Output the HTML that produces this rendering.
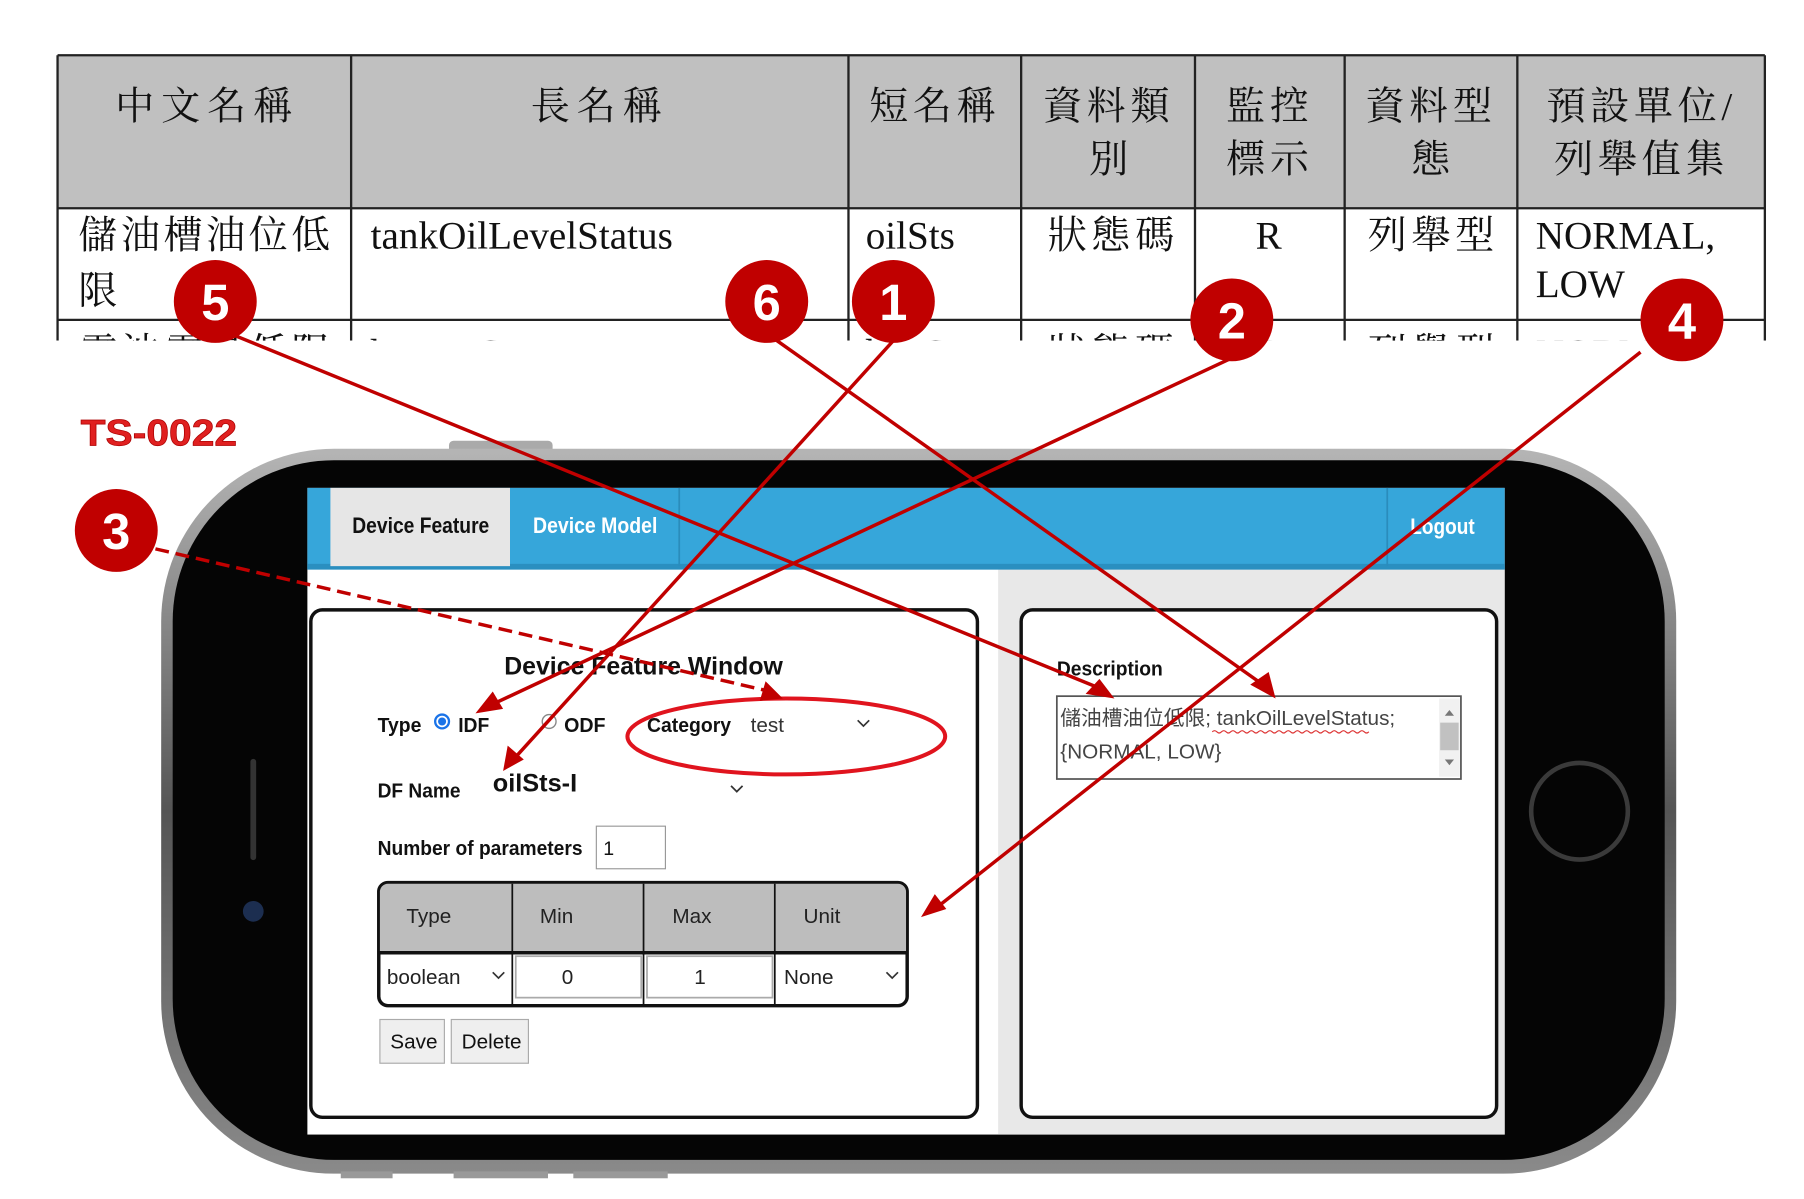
<!DOCTYPE html>
<html><head><meta charset="utf-8">
<style>
html,body{margin:0;padding:0;background:#fff;width:1804px;height:1199px;overflow:hidden}
svg{display:block}
.s{font-family:"Liberation Serif","Noto Serif CJK TC","Noto Serif CJK SC",serif;font-size:34px;fill:#111}
.u{font-family:"Liberation Sans","Noto Sans CJK TC",sans-serif;fill:#111}
.n{font-family:"Liberation Sans",sans-serif;font-weight:bold;fill:#fff;font-size:44px;text-anchor:middle}
</style></head><body>
<svg width="1804" height="1199" viewBox="0 0 1567 1042" preserveAspectRatio="none" xmlns="http://www.w3.org/2000/svg">
<defs>
<linearGradient id="edge" x1="0" y1="0" x2="0" y2="1">
<stop offset="0" stop-color="#b5b5b5"/><stop offset="0.5" stop-color="#555"/><stop offset="1" stop-color="#8a8a8a"/>
</linearGradient>
</defs>
<!-- table -->
<rect x="50" y="48" width="1483" height="133" fill="#c0c0c0"/>
<rect x="50" y="181" width="1483" height="120" fill="#fff"/>
<g stroke="#222" stroke-width="2" fill="none">
<line x1="50" y1="48" x2="1533" y2="48"/>
<line x1="50" y1="181" x2="1533" y2="181"/>
<line x1="50" y1="278" x2="1533" y2="278"/>
<line x1="50" y1="48" x2="50" y2="296"/>
<line x1="305" y1="48" x2="305" y2="296"/>
<line x1="737" y1="48" x2="737" y2="296"/>
<line x1="887" y1="48" x2="887" y2="296"/>
<line x1="1038" y1="48" x2="1038" y2="296"/>
<line x1="1168" y1="48" x2="1168" y2="296"/>
<line x1="1318" y1="48" x2="1318" y2="296"/>
<line x1="1533" y1="48" x2="1533" y2="296"/>
</g>
<g class="s" text-anchor="middle">
<text x="180" y="104" letter-spacing="6">中文名稱</text>
<text x="521" y="104" letter-spacing="6">長名稱</text>
<text x="812" y="104" letter-spacing="4">短名稱</text>
<text x="963" y="104" letter-spacing="4">資料類</text><text x="963" y="150">別</text>
<text x="1103" y="104" letter-spacing="4">監控</text><text x="1103" y="150" letter-spacing="4">標示</text>
<text x="1243" y="104" letter-spacing="4">資料型</text><text x="1243" y="150">態</text>
<text x="1426" y="104" letter-spacing="4">預設單位/</text><text x="1426" y="150" letter-spacing="4">列舉值集</text>
<text x="1102" y="216">R</text>
<text x="1102" y="318">R</text>
</g>
<g class="s">
<text x="68" y="216" letter-spacing="3">儲油槽油位低</text><text x="68" y="264">限</text>
<text x="322" y="216">tankOilLevelStatus</text>
<text x="752" y="216">oilSts</text>
<text x="910" y="216" letter-spacing="4">狀態碼</text>
<text x="1188" y="216" letter-spacing="4">列舉型</text>
<text x="1334" y="216">NORMAL,</text><text x="1334" y="258">LOW</text>
<text x="68" y="318" letter-spacing="3">電池電量低限</text>
<text x="322" y="318">batteryStatus</text>
<text x="752" y="318">battSts</text>
<text x="910" y="318" letter-spacing="4">狀態碼</text>
<text x="1188" y="318" letter-spacing="4">列舉型</text>
<text x="1334" y="318">NORMAL</text>
</g>
<rect x="0" y="296" width="1567" height="80" fill="#fff"/>

<text x="70" y="387" font-family="Liberation Sans,sans-serif" font-weight="bold" font-size="32" fill="#e02020" stroke="#a00" stroke-width="0.6" textLength="136" lengthAdjust="spacingAndGlyphs">TS-0022</text>

<!-- phone -->
<rect x="390" y="383" width="90" height="12" rx="4" fill="#aaa"/>
<rect x="140" y="390" width="1316" height="630" rx="150" fill="url(#edge)"/>
<rect x="150" y="400" width="1296" height="608" rx="140" fill="#050505"/>
<rect x="296" y="1018" width="45" height="6" fill="#999"/>
<rect x="394" y="1018" width="82" height="6" fill="#999"/>
<rect x="498" y="1018" width="82" height="6" fill="#999"/>
<line x1="220" y1="662" x2="220" y2="745" stroke="#333" stroke-width="5" stroke-linecap="round"/>
<circle cx="220" cy="792" r="9" fill="#1c2e50"/>
<circle cx="1372" cy="705" r="42" fill="none" stroke="#3a3a3a" stroke-width="4"/>

<!-- screen -->
<rect x="267" y="424" width="1040" height="562" fill="#fff"/>
<rect x="867" y="495" width="440" height="491" fill="#e8e8e8"/>
<rect x="267" y="424" width="1040" height="71" fill="#36a6da"/>
<rect x="267" y="490" width="1040" height="5" fill="#2a8fc0"/>
<rect x="287" y="424" width="156" height="68" fill="#e6e6e6"/>
<line x1="590" y1="424" x2="590" y2="492" stroke="#2a8cbc" stroke-width="1.5"/>
<line x1="1205" y1="424" x2="1205" y2="492" stroke="#2a8cbc" stroke-width="1.5"/>
<text class="u" x="306" y="463" font-size="19" font-weight="bold" textLength="119" lengthAdjust="spacingAndGlyphs">Device Feature</text>
<text class="u" x="463" y="463" font-size="19" font-weight="bold" style="fill:#fff" textLength="108" lengthAdjust="spacingAndGlyphs">Device Model</text>
<text class="u" x="1225" y="464" font-size="19" font-weight="bold" style="fill:#fff" textLength="56" lengthAdjust="spacingAndGlyphs">Logout</text>

<rect x="270" y="530" width="579" height="441" rx="10" fill="#fff" stroke="#111" stroke-width="3"/>
<rect x="887" y="530" width="413" height="441" rx="10" fill="#fff" stroke="#111" stroke-width="3"/>

<text class="u" x="438" y="586" font-size="22" font-weight="bold" textLength="242" lengthAdjust="spacingAndGlyphs">Device Feature Window</text>
<text class="u" x="328" y="636" font-size="18" font-weight="bold" textLength="38" lengthAdjust="spacingAndGlyphs">Type</text>
<circle cx="384" cy="627" r="6" fill="#fff" stroke="#1a73e8" stroke-width="2"/><circle cx="384" cy="627" r="3.5" fill="#1a73e8"/>
<text class="u" x="398" y="636" font-size="18" font-weight="bold" textLength="27" lengthAdjust="spacingAndGlyphs">IDF</text>
<circle cx="477" cy="627" r="6" fill="#fff" stroke="#888" stroke-width="1.2"/>
<text class="u" x="490" y="636" font-size="18" font-weight="bold" textLength="36" lengthAdjust="spacingAndGlyphs">ODF</text>
<text class="u" x="562" y="636" font-size="18" font-weight="bold" textLength="73" lengthAdjust="spacingAndGlyphs">Category</text>
<text class="u" x="652" y="636" font-size="18" style="fill:#333">test</text>
<path d="M745 626 l5 5 l5 -5" fill="none" stroke="#333" stroke-width="1.5"/>
<ellipse cx="683" cy="640" rx="138" ry="33" fill="none" stroke="#e0141e" stroke-width="3.5"/>

<text class="u" x="328" y="693" font-size="18" font-weight="bold" textLength="72" lengthAdjust="spacingAndGlyphs">DF Name</text>
<text class="u" x="428" y="688" font-size="22" font-weight="bold">oilSts-I</text>
<path d="M635 683 l5 5 l5 -5" fill="none" stroke="#333" stroke-width="1.5"/>

<text class="u" x="328" y="743" font-size="18" font-weight="bold" textLength="178" lengthAdjust="spacingAndGlyphs">Number of parameters</text>
<rect x="518" y="718" width="60" height="37" fill="#fff" stroke="#999" stroke-width="1"/>
<text class="u" x="524" y="743" font-size="17">1</text>

<rect x="329" y="767" width="459" height="107" rx="8" fill="#fff" stroke="#111" stroke-width="3"/>
<path d="M330 828 V775 a7 7 0 0 1 7 -7 H780 a7 7 0 0 1 7 7 V828 Z" fill="#bdbdbd"/>
<line x1="329" y1="828" x2="788" y2="828" stroke="#111" stroke-width="3"/>
<g stroke="#111" stroke-width="1.5">
<line x1="445" y1="768" x2="445" y2="873"/><line x1="559" y1="768" x2="559" y2="873"/><line x1="673" y1="768" x2="673" y2="873"/>
</g>
<g class="u" font-size="18" style="fill:#222">
<text x="353" y="802">Type</text><text x="469" y="802">Min</text><text x="584" y="802">Max</text><text x="698" y="802">Unit</text>
<text x="336" y="855">boolean</text><text x="488" y="855">0</text><text x="603" y="855">1</text><text x="681" y="855">None</text>
</g>
<rect x="448" y="831" width="109" height="36" fill="none" stroke="#aaa" stroke-width="1.5"/>
<rect x="562" y="831" width="109" height="36" fill="none" stroke="#aaa" stroke-width="1.5"/>
<path d="M428 845 l5 5 l5 -5" fill="none" stroke="#333" stroke-width="1.5"/>
<path d="M770 845 l5 5 l5 -5" fill="none" stroke="#333" stroke-width="1.5"/>

<rect x="330" y="886" width="56" height="38" fill="#efefef" stroke="#aaa"/>
<rect x="392" y="886" width="67" height="38" fill="#efefef" stroke="#aaa"/>
<text class="u" x="339" y="911" font-size="18">Save</text>
<text class="u" x="401" y="911" font-size="18">Delete</text>

<text class="u" x="918" y="587" font-size="18" font-weight="bold" textLength="92" lengthAdjust="spacingAndGlyphs">Description</text>
<rect x="918" y="605" width="351" height="72" fill="#fff" stroke="#555" stroke-width="1.5"/>
<rect x="1250" y="607" width="18" height="68" fill="#f1f1f1"/>
<rect x="1251" y="628" width="16" height="24" fill="#c1c1c1"/>
<path d="M1255 622 l4 -5 l4 5z M1255 660 l4 5 l4 -5z" fill="#777"/>
<text class="u" x="921" y="630" font-size="18" style="fill:#444">儲油槽油位低限; tankOilLevelStatus;</text>
<text class="u" x="921" y="659" font-size="18" style="fill:#444">{NORMAL, LOW}</text>
<path d="M1053 636 q2 -2 4 0 t4 0 t4 0 t4 0 t4 0 t4 0 t4 0 t4 0 t4 0 t4 0 t4 0 t4 0 t4 0 t4 0 t4 0 t4 0 t4 0 t4 0 t4 0 t4 0 t4 0 t4 0 t4 0 t4 0 t4 0 t4 0 t4 0 t4 0 t4 0 t4 0 t4 0 t4 0 t4 0 t4 0" fill="none" stroke="#d33" stroke-width="1"/>

<!-- arrows -->
<g stroke="#c00000" stroke-width="3" fill="none">
<line x1="200" y1="290" x2="955" y2="598"/>
<line x1="672" y1="294" x2="1097" y2="595"/>
<line x1="776" y1="296" x2="446" y2="660"/>
<line x1="1068" y1="312" x2="428" y2="612"/>
<line x1="1425" y1="306" x2="812" y2="790"/>
<line x1="135" y1="477" x2="665" y2="600" stroke-dasharray="12 6"/>
</g>
<g fill="#c00000">
<polygon points="968,607 943,603 955,590"/>
<polygon points="1108,607 1086,595 1102,584"/>
<polygon points="437,670 441,648 455,660"/>
<polygon points="413,620 428,601 437,616"/>
<polygon points="800,797 812,777 822,790"/>
<polygon points="680,607 660,609 665,592"/>
</g>
<g>
<circle cx="187" cy="262" r="36" fill="#c00000"/><text class="n" x="187" y="278">5</text>
<circle cx="666" cy="262" r="36" fill="#c00000"/><text class="n" x="666" y="278">6</text>
<circle cx="776" cy="262" r="36" fill="#c00000"/><text class="n" x="776" y="278">1</text>
<circle cx="1070" cy="278" r="36" fill="#c00000"/><text class="n" x="1070" y="294">2</text>
<circle cx="1461" cy="278" r="36" fill="#c00000"/><text class="n" x="1461" y="294">4</text>
<circle cx="101" cy="461" r="36" fill="#c00000"/><text class="n" x="101" y="477">3</text>
</g>
</svg>
</body></html>
